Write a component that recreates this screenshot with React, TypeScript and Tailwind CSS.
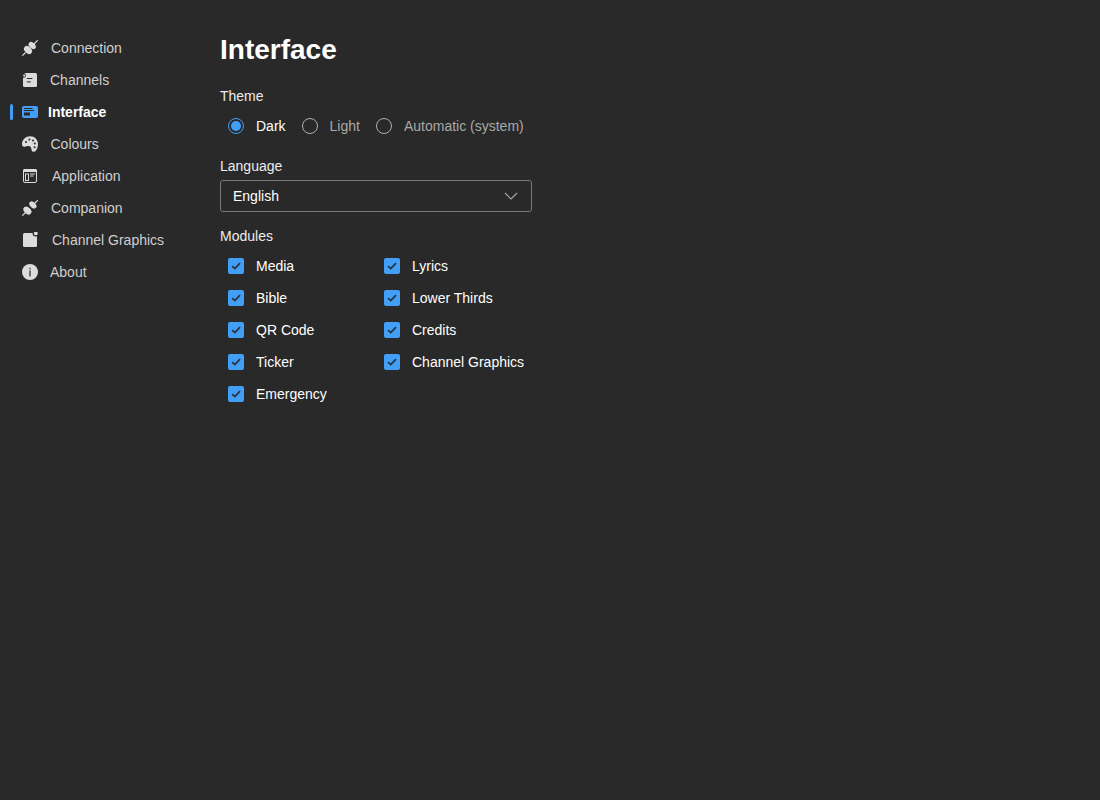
import type { ReactNode } from "react"

const FG = "#dcdcdc"
const BG = "#292929"

function PlugIcon({ split }: { split?: boolean }) {
  return (
    <svg width="16" height="16" viewBox="0 0 16 16" className="shrink-0">
      <path d="M0.3 15.7 L3.5 12.5" stroke={FG} strokeWidth="1.2" />
      <path d="M11.5 4.5 L15.7 0.3" stroke={FG} strokeWidth="1.2" />
      <ellipse cx={split ? 10.9 : 10.2} cy={split ? 4.9 : 5.6} rx="2.8" ry="4.2" transform={split ? "rotate(-45 10.9 4.9)" : "rotate(-45 10.2 5.6)"} fill={FG} />
      <ellipse cx={split ? 5.4 : 6} cy={split ? 10.6 : 10} rx="3.2" ry="4.6" transform={split ? "rotate(-45 5.4 10.6)" : "rotate(-45 6 10)"} fill={FG} />
    </svg>
  )
}

function ChannelsIcon() {
  return (
    <svg width="16" height="16" viewBox="0 0 16 16" className="shrink-0">
      <rect x="1" y="1" width="14" height="14" rx="1.5" fill={FG} />
      <circle cx="1.6" cy="3.4" r="2.3" fill={BG} />
      <circle cx="2.2" cy="3.6" r="1.1" fill={FG} />
      <rect x="4.8" y="6" width="5.6" height="1" fill={BG} />
      <rect x="4.8" y="9.4" width="4" height="1" fill={BG} />
    </svg>
  )
}

function InterfaceIcon() {
  return (
    <svg width="16" height="16" viewBox="0 0 16 16" className="shrink-0">
      <rect x="0" y="2" width="16" height="12" rx="2" fill="#429ef7" />
      <rect x="2" y="4" width="8.5" height="1" fill={BG} />
      <rect x="2" y="6" width="10" height="1" fill={BG} />
      <rect x="2" y="8.5" width="6" height="3" fill={BG} />
    </svg>
  )
}

function PaletteIcon() {
  return (
    <svg width="16" height="16" viewBox="0 0 16 16" className="shrink-0">
      <path d="M8.2 0.2 C12.6 0.2 16 3.6 16 8 C16 12.4 13.8 15.8 11.6 15.8 C9.8 15.8 9.6 14.4 9.4 13 C9.2 11.4 8.4 10.2 6.4 10 C4.4 9.8 3.2 10.8 2 10.8 C0.6 10.8 0 9.6 0 8 C0 3.6 3.8 0.2 8.2 0.2 Z" fill={FG} />
      <circle cx="4" cy="6" r="1" fill={BG} />
      <circle cx="7.4" cy="3.4" r="1" fill={BG} />
      <circle cx="11" cy="4.4" r="1" fill={BG} />
      <circle cx="12.8" cy="7.6" r="1" fill={BG} />
      <circle cx="12.6" cy="11.2" r="1" fill={BG} />
    </svg>
  )
}

function ApplicationIcon() {
  return (
    <svg width="16" height="16" viewBox="0 0 16 16" className="shrink-0">
      <rect x="1.5" y="1.5" width="13" height="13" rx="1.5" fill="none" stroke={FG} strokeWidth="1" />
      <rect x="1" y="1" width="14" height="3" rx="1.5" fill={FG} />
      <rect x="3.5" y="6" width="3" height="6.5" fill="none" stroke={FG} strokeWidth="1" />
      <rect x="8" y="5.5" width="5" height="1" fill={FG} />
      <rect x="8" y="7.5" width="3.5" height="1" fill={FG} />
    </svg>
  )
}

function GraphicsIcon() {
  return (
    <svg width="16" height="16" viewBox="0 0 16 16" className="shrink-0">
      <rect x="1" y="1" width="14" height="14" rx="1.5" fill={FG} />
      <circle cx="13.8" cy="1.3" r="3.2" fill={BG} />
      <circle cx="13.8" cy="1.4" r="1.9" fill={FG} />
    </svg>
  )
}

function InfoIcon() {
  return (
    <svg width="16" height="16" viewBox="0 0 16 16" className="shrink-0">
      <circle cx="8" cy="8" r="8" fill={FG} />
      <rect x="7.2" y="3.8" width="1.6" height="1.6" fill="#555" />
      <rect x="7.2" y="6.4" width="1.6" height="6" fill="#555" />
    </svg>
  )
}

type NavItem = { label: string; icon: ReactNode; gap: string; active?: boolean }

const nav: NavItem[] = [
  { label: "Connection", icon: <PlugIcon />, gap: "gap-[13px]" },
  { label: "Channels", icon: <ChannelsIcon />, gap: "gap-3" },
  { label: "Interface", icon: <InterfaceIcon />, gap: "gap-[10px]", active: true },
  { label: "Colours", icon: <PaletteIcon />, gap: "gap-[12.5px]" },
  { label: "Application", icon: <ApplicationIcon />, gap: "gap-[14px]" },
  { label: "Companion", icon: <PlugIcon split />, gap: "gap-[13px]" },
  { label: "Channel Graphics", icon: <GraphicsIcon />, gap: "gap-[14px]" },
  { label: "About", icon: <InfoIcon />, gap: "gap-3" },
]

const modules = [
  "Media",
  "Lyrics",
  "Bible",
  "Lower Thirds",
  "QR Code",
  "Credits",
  "Ticker",
  "Channel Graphics",
  "Emergency",
]

function Radio({ label, checked }: { label: string; checked?: boolean }) {
  return (
    <div className="flex items-center gap-3">
      <span
        className={`flex h-4 w-4 items-center justify-center rounded-full border ${
          checked ? "border-[#429ef7]" : "border-[#b0b0b0]"
        }`}
      >
        {checked && <span className="h-[10px] w-[10px] rounded-full bg-[#429ef7]" />}
      </span>
      <span className={checked ? "text-white" : "text-[#a8a8a8]"}>{label}</span>
    </div>
  )
}

function Check({ label }: { label: string }) {
  return (
    <div className="flex h-8 items-center gap-3 pl-2">
      <span className="flex h-4 w-4 items-center justify-center rounded-[2px] bg-[#429ef7]">
        <svg width="10" height="8" viewBox="0 0 10 8" fill="none">
          <path d="M1 4 L3.8 6.6 L9 1.2" stroke="#263238" strokeWidth="1.7" />
        </svg>
      </span>
      <span className="text-white">{label}</span>
    </div>
  )
}

export default function App() {
  return (
    <div className="flex min-h-[800px] bg-[#292929] pt-8 font-['Liberation_Sans',sans-serif] text-sm text-white">
      <nav className="w-[220px] shrink-0">
        {nav.map((item) => (
          <div key={item.label} className={`relative flex h-8 items-center pl-[22px] ${item.gap}`}>
            {item.active && (
              <span className="absolute left-[10px] top-2 h-4 w-[3px] rounded-sm bg-[#429ef7]" />
            )}
            {item.icon}
            <span className={item.active ? "font-bold text-white" : "text-[#cfcfcf]"}>{item.label}</span>
          </div>
        ))}
      </nav>
      <main>
        <h1 className="text-[28px] leading-9 font-bold">Interface</h1>
        <div className="mt-[18px] leading-5 text-[#ececec]">Theme</div>
        <div className="mt-1 flex h-8 items-center gap-4 pl-2">
          <Radio label="Dark" checked />
          <Radio label="Light" />
          <Radio label="Automatic (system)" />
        </div>
        <div className="mt-[14px] leading-5 text-[#ececec]">Language</div>
        <div className="mt-1 flex h-8 w-[312px] items-center justify-between rounded-[3px] border border-[#777] pr-[13px] pl-3">
          <span>English</span>
          <svg width="14" height="8" viewBox="0 0 14 8" fill="none">
            <path d="M1 1 L7 7 L13 1" stroke="#a8a8a8" strokeWidth="1.1" />
          </svg>
        </div>
        <div className="mt-[14px] leading-5 text-[#ececec]">Modules</div>
        <div className="mt-1 grid grid-cols-[156px_156px]">
          {modules.map((m) => (
            <Check key={m} label={m} />
          ))}
        </div>
      </main>
    </div>
  )
}
